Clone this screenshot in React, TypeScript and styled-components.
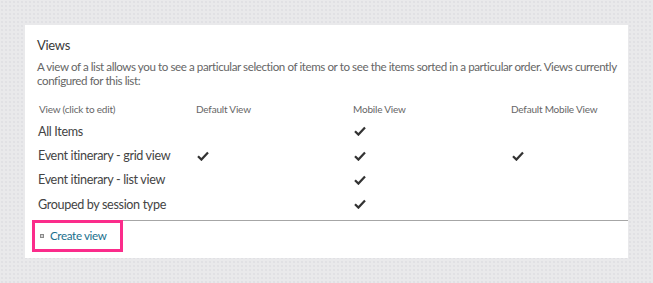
import React from "react";
import styled, { createGlobalStyle } from "styled-components";

const Global = createGlobalStyle`
  html, body { margin: 0; padding: 0; }
  body {
    background-color: #e9e9eb;
    background-image: radial-gradient(#dcdce0 0.6px, transparent 0.9px);
    background-size: 4px 4px;
    font-family: "Lato", "Open Sans", sans-serif;
  }
`;

const Page = styled.div`
  width: 653px;
  height: 283px;
  box-sizing: border-box;
  padding: 25px;
`;

const Card = styled.section`
  background: #fff;
  width: 603px;
  height: 233px;
  box-sizing: border-box;
  padding: 11px 8px 0 12px;
  display: flex;
  flex-direction: column;
`;

const Title = styled.h2`
  margin: 0;
  font-size: 13px;
  line-height: 18px;
  font-weight: 400;
  letter-spacing: -0.3px;
  color: #3a3a3a;
`;

const Description = styled.p`
  margin: 6px 0 0;
  font-size: 11.6px;
  line-height: 14px;
  letter-spacing: -0.42px;
  color: #666;
`;

const Grid = styled.div`
  margin-top: 11px;
  display: grid;
  grid-template-columns: 159px 157px 158px 1fr;
`;

const HeadCell = styled.div<{ $first?: boolean }>`
  height: 20px;
  padding-bottom: 1px;
  box-sizing: border-box;
  display: flex;
  align-items: center;
  padding-left: ${(p) => (p.$first ? "2px" : "0")};
  font-size: 10px;
  letter-spacing: -0.2px;
  color: #666;
`;

const Cell = styled.div`
  height: 24.4px;
  display: flex;
  align-items: center;
  padding-left: 1px;
  font-size: 12.6px;
  letter-spacing: -0.35px;
  color: #444;
`;

const Footer = styled.div`
  margin: 3px -8px 0 -5px;
  border-top: 1px solid #a6a6a6;
  display: flex;
`;

const Highlight = styled.div`
  margin-top: -1px;
  width: 91px;
  height: 32px;
  box-sizing: border-box;
  border: 3px solid #fb2c8b;
  display: flex;
  align-items: center;
  padding-left: 5px;
  gap: 6px;
`;

const Bullet = styled.span`
  width: 4px;
  height: 4px;
  box-sizing: border-box;
  border: 1px solid #8a8a8a;
  background: #d4d4d4;
`;

const Link = styled.a`
  font-size: 11.6px;
  letter-spacing: -0.35px;
  color: #19708d;
  text-decoration: none;
  white-space: nowrap;
`;

const Check = () => (
  <svg width="12" height="10" viewBox="0 0 12 10">
    <path d="M1 5.2 L4.4 8.6 L11 1.4" fill="none" stroke="#333" strokeWidth="2.2" />
  </svg>
);

const rows: [string, boolean, boolean, boolean][] = [
  ["All Items", false, true, false],
  ["Event itinerary - grid view", true, true, true],
  ["Event itinerary - list view", false, true, false],
  ["Grouped by session type", false, true, false],
];

export default function App() {
  return (
    <>
      <Global />
      <Page>
        <Card>
          <Title>Views</Title>
          <Description>
            A view of a list allows you to see a particular selection of items or to see the items sorted in a
            particular order. Views currently configured for this list:
          </Description>
          <Grid>
            <HeadCell $first>View (click to edit)</HeadCell>
            <HeadCell>Default View</HeadCell>
            <HeadCell>Mobile View</HeadCell>
            <HeadCell>Default Mobile View</HeadCell>
            {rows.map(([name, a, b, c]) => (
              <React.Fragment key={name}>
                <Cell>{name}</Cell>
                <Cell>{a && <Check />}</Cell>
                <Cell>{b && <Check />}</Cell>
                <Cell>{c && <Check />}</Cell>
              </React.Fragment>
            ))}
          </Grid>
          <Footer>
            <Highlight>
              <Bullet />
              <Link href="#">Create view</Link>
            </Highlight>
          </Footer>
        </Card>
      </Page>
    </>
  );
}
